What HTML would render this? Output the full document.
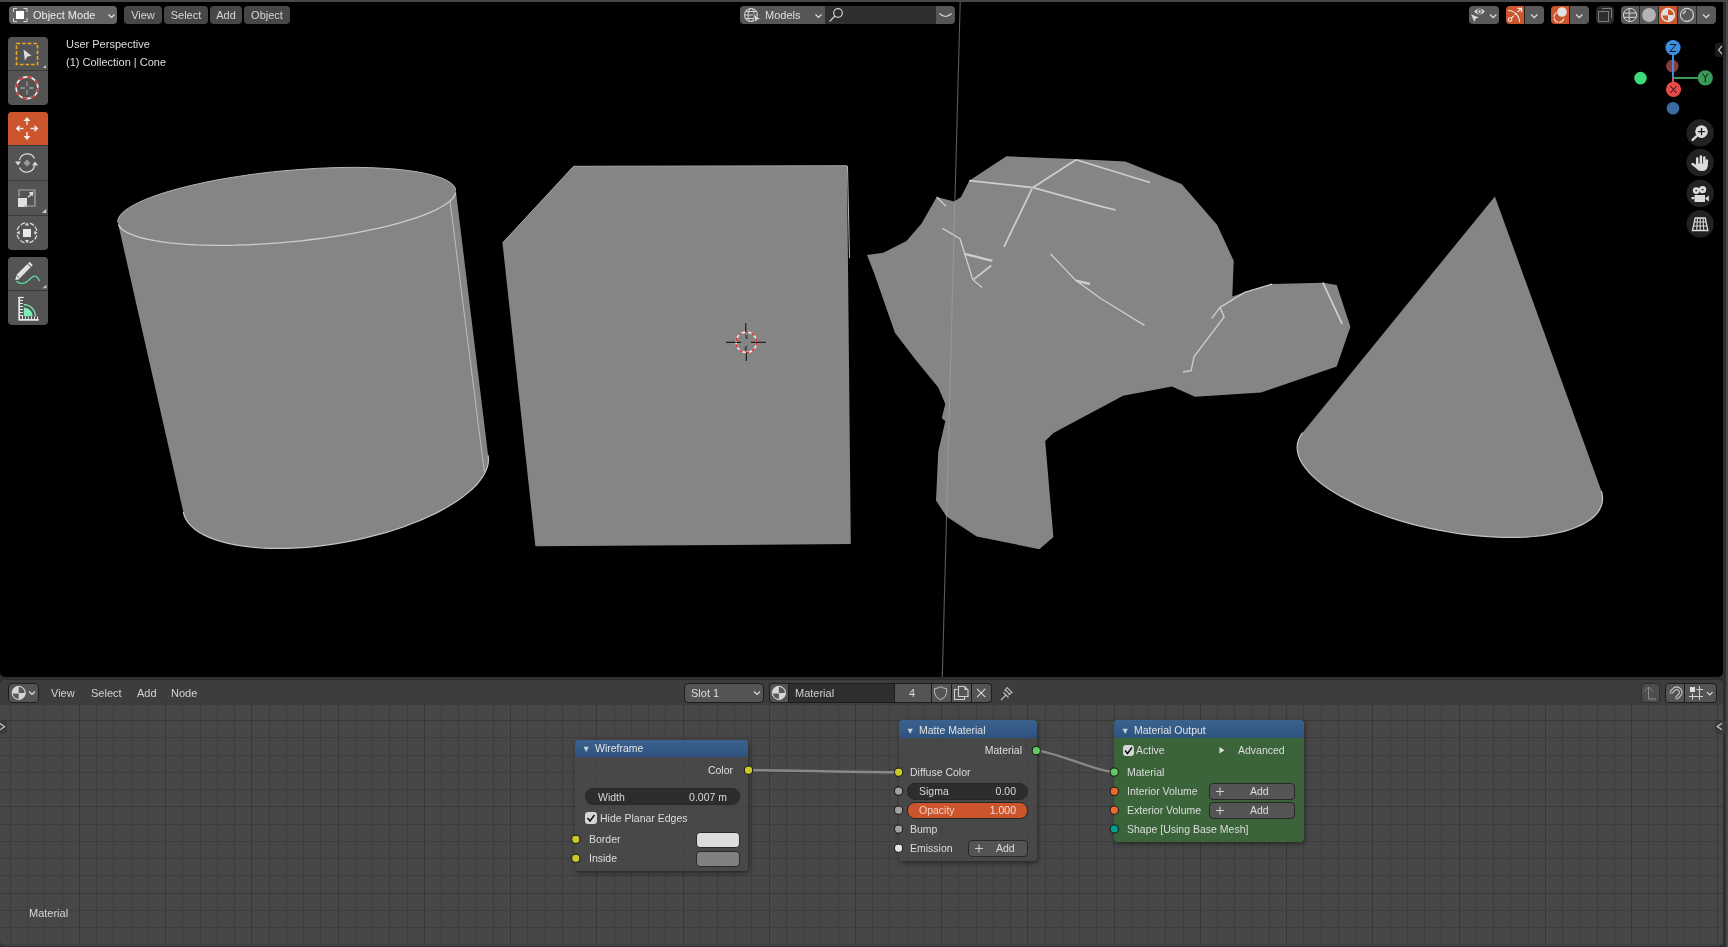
<!DOCTYPE html><html><head><meta charset="utf-8"><style>
*{box-sizing:border-box;margin:0;padding:0}
html,body{width:1728px;height:947px;overflow:hidden;background:#2e2e2e;font-family:"Liberation Sans",sans-serif;font-size:11px;color:#e6e6e6}
.a{position:absolute}
.t{position:absolute;white-space:pre;line-height:11px;font-size:11px;will-change:transform}
svg{position:absolute;overflow:visible}
</style></head><body><div class="a" style="left:0px;top:0px;width:1728px;height:2px;background:#474747;border-radius:0;"></div><div class="a" style="left:1726px;top:0px;width:2px;height:947px;background:#484848;border-radius:0;"></div><div class="a" style="left:0px;top:2px;width:1723px;height:675px;background:#000;border-radius:0 0 5px 5px;"></div><div class="a" style="left:0;top:680px;width:1723px;height:266px;background:#474747;border-radius:5px;overflow:hidden"><div class="a" style="left:0;top:0;width:1723px;height:25px;background:#3d3d3d"></div></div><svg style="left:0px;top:0px" width="1728" height="947" viewBox="0 0 1728 947"><rect x="10" y="705" width="1" height="241" fill="#3d3d3d"/><rect x="27" y="705" width="1" height="241" fill="#3d3d3d"/><rect x="44" y="705" width="1" height="241" fill="#3d3d3d"/><rect x="62" y="705" width="1" height="241" fill="#3d3d3d"/><rect x="79" y="705" width="1" height="241" fill="#383838"/><rect x="96" y="705" width="1" height="241" fill="#3d3d3d"/><rect x="113" y="705" width="1" height="241" fill="#3d3d3d"/><rect x="131" y="705" width="1" height="241" fill="#3d3d3d"/><rect x="148" y="705" width="1" height="241" fill="#3d3d3d"/><rect x="165" y="705" width="1" height="241" fill="#383838"/><rect x="182" y="705" width="1" height="241" fill="#3d3d3d"/><rect x="200" y="705" width="1" height="241" fill="#3d3d3d"/><rect x="217" y="705" width="1" height="241" fill="#3d3d3d"/><rect x="234" y="705" width="1" height="241" fill="#3d3d3d"/><rect x="251" y="705" width="1" height="241" fill="#383838"/><rect x="269" y="705" width="1" height="241" fill="#3d3d3d"/><rect x="286" y="705" width="1" height="241" fill="#3d3d3d"/><rect x="303" y="705" width="1" height="241" fill="#3d3d3d"/><rect x="320" y="705" width="1" height="241" fill="#3d3d3d"/><rect x="338" y="705" width="1" height="241" fill="#383838"/><rect x="355" y="705" width="1" height="241" fill="#3d3d3d"/><rect x="372" y="705" width="1" height="241" fill="#3d3d3d"/><rect x="389" y="705" width="1" height="241" fill="#3d3d3d"/><rect x="407" y="705" width="1" height="241" fill="#3d3d3d"/><rect x="424" y="705" width="1" height="241" fill="#383838"/><rect x="441" y="705" width="1" height="241" fill="#3d3d3d"/><rect x="458" y="705" width="1" height="241" fill="#3d3d3d"/><rect x="476" y="705" width="1" height="241" fill="#3d3d3d"/><rect x="493" y="705" width="1" height="241" fill="#3d3d3d"/><rect x="510" y="705" width="1" height="241" fill="#383838"/><rect x="527" y="705" width="1" height="241" fill="#3d3d3d"/><rect x="545" y="705" width="1" height="241" fill="#3d3d3d"/><rect x="562" y="705" width="1" height="241" fill="#3d3d3d"/><rect x="579" y="705" width="1" height="241" fill="#3d3d3d"/><rect x="596" y="705" width="1" height="241" fill="#383838"/><rect x="614" y="705" width="1" height="241" fill="#3d3d3d"/><rect x="631" y="705" width="1" height="241" fill="#3d3d3d"/><rect x="648" y="705" width="1" height="241" fill="#3d3d3d"/><rect x="665" y="705" width="1" height="241" fill="#3d3d3d"/><rect x="683" y="705" width="1" height="241" fill="#383838"/><rect x="700" y="705" width="1" height="241" fill="#3d3d3d"/><rect x="717" y="705" width="1" height="241" fill="#3d3d3d"/><rect x="734" y="705" width="1" height="241" fill="#3d3d3d"/><rect x="751" y="705" width="1" height="241" fill="#3d3d3d"/><rect x="769" y="705" width="1" height="241" fill="#383838"/><rect x="786" y="705" width="1" height="241" fill="#3d3d3d"/><rect x="803" y="705" width="1" height="241" fill="#3d3d3d"/><rect x="820" y="705" width="1" height="241" fill="#3d3d3d"/><rect x="838" y="705" width="1" height="241" fill="#3d3d3d"/><rect x="855" y="705" width="1" height="241" fill="#383838"/><rect x="872" y="705" width="1" height="241" fill="#3d3d3d"/><rect x="889" y="705" width="1" height="241" fill="#3d3d3d"/><rect x="907" y="705" width="1" height="241" fill="#3d3d3d"/><rect x="924" y="705" width="1" height="241" fill="#3d3d3d"/><rect x="941" y="705" width="1" height="241" fill="#383838"/><rect x="958" y="705" width="1" height="241" fill="#3d3d3d"/><rect x="976" y="705" width="1" height="241" fill="#3d3d3d"/><rect x="993" y="705" width="1" height="241" fill="#3d3d3d"/><rect x="1010" y="705" width="1" height="241" fill="#3d3d3d"/><rect x="1027" y="705" width="1" height="241" fill="#383838"/><rect x="1045" y="705" width="1" height="241" fill="#3d3d3d"/><rect x="1062" y="705" width="1" height="241" fill="#3d3d3d"/><rect x="1079" y="705" width="1" height="241" fill="#3d3d3d"/><rect x="1096" y="705" width="1" height="241" fill="#3d3d3d"/><rect x="1114" y="705" width="1" height="241" fill="#383838"/><rect x="1131" y="705" width="1" height="241" fill="#3d3d3d"/><rect x="1148" y="705" width="1" height="241" fill="#3d3d3d"/><rect x="1165" y="705" width="1" height="241" fill="#3d3d3d"/><rect x="1183" y="705" width="1" height="241" fill="#3d3d3d"/><rect x="1200" y="705" width="1" height="241" fill="#383838"/><rect x="1217" y="705" width="1" height="241" fill="#3d3d3d"/><rect x="1234" y="705" width="1" height="241" fill="#3d3d3d"/><rect x="1252" y="705" width="1" height="241" fill="#3d3d3d"/><rect x="1269" y="705" width="1" height="241" fill="#3d3d3d"/><rect x="1286" y="705" width="1" height="241" fill="#383838"/><rect x="1303" y="705" width="1" height="241" fill="#3d3d3d"/><rect x="1321" y="705" width="1" height="241" fill="#3d3d3d"/><rect x="1338" y="705" width="1" height="241" fill="#3d3d3d"/><rect x="1355" y="705" width="1" height="241" fill="#3d3d3d"/><rect x="1372" y="705" width="1" height="241" fill="#383838"/><rect x="1390" y="705" width="1" height="241" fill="#3d3d3d"/><rect x="1407" y="705" width="1" height="241" fill="#3d3d3d"/><rect x="1424" y="705" width="1" height="241" fill="#3d3d3d"/><rect x="1441" y="705" width="1" height="241" fill="#3d3d3d"/><rect x="1459" y="705" width="1" height="241" fill="#383838"/><rect x="1476" y="705" width="1" height="241" fill="#3d3d3d"/><rect x="1493" y="705" width="1" height="241" fill="#3d3d3d"/><rect x="1510" y="705" width="1" height="241" fill="#3d3d3d"/><rect x="1528" y="705" width="1" height="241" fill="#3d3d3d"/><rect x="1545" y="705" width="1" height="241" fill="#383838"/><rect x="1562" y="705" width="1" height="241" fill="#3d3d3d"/><rect x="1579" y="705" width="1" height="241" fill="#3d3d3d"/><rect x="1597" y="705" width="1" height="241" fill="#3d3d3d"/><rect x="1614" y="705" width="1" height="241" fill="#3d3d3d"/><rect x="1631" y="705" width="1" height="241" fill="#383838"/><rect x="1648" y="705" width="1" height="241" fill="#3d3d3d"/><rect x="1666" y="705" width="1" height="241" fill="#3d3d3d"/><rect x="1683" y="705" width="1" height="241" fill="#3d3d3d"/><rect x="1700" y="705" width="1" height="241" fill="#3d3d3d"/><rect x="1717" y="705" width="1" height="241" fill="#383838"/><rect x="0" y="944" width="1723" height="1" fill="#3d3d3d"/><rect x="0" y="927" width="1723" height="1" fill="#3d3d3d"/><rect x="0" y="910" width="1723" height="1" fill="#3d3d3d"/><rect x="0" y="893" width="1723" height="1" fill="#383838"/><rect x="0" y="875" width="1723" height="1" fill="#3d3d3d"/><rect x="0" y="858" width="1723" height="1" fill="#3d3d3d"/><rect x="0" y="841" width="1723" height="1" fill="#3d3d3d"/><rect x="0" y="824" width="1723" height="1" fill="#3d3d3d"/><rect x="0" y="806" width="1723" height="1" fill="#383838"/><rect x="0" y="789" width="1723" height="1" fill="#3d3d3d"/><rect x="0" y="772" width="1723" height="1" fill="#3d3d3d"/><rect x="0" y="755" width="1723" height="1" fill="#3d3d3d"/><rect x="0" y="737" width="1723" height="1" fill="#3d3d3d"/><rect x="0" y="720" width="1723" height="1" fill="#383838"/></svg><svg style="left:0px;top:0px" width="1728" height="947" viewBox="0 0 1728 947"><polygon points="117.8,222.3 117.9,220.0 118.8,217.6 120.4,215.1 122.7,212.6 125.7,210.1 129.4,207.5 133.7,205.0 138.8,202.4 144.4,199.9 150.7,197.4 157.5,194.9 164.9,192.5 172.8,190.2 181.2,187.9 190.1,185.7 199.4,183.6 209.0,181.6 219.0,179.6 229.3,177.8 239.8,176.2 250.5,174.6 261.4,173.2 272.4,171.9 283.4,170.8 294.5,169.9 305.5,169.1 316.4,168.4 327.3,167.9 337.9,167.6 348.3,167.4 358.5,167.4 368.4,167.6 377.9,168.0 387.0,168.5 395.7,169.1 403.9,170.0 411.6,170.9 418.8,172.1 425.4,173.4 431.4,174.8 436.8,176.4 441.6,178.0 445.7,179.8 449.1,181.8 451.9,183.8 453.9,185.9 455.2,188.2 455.8,190.4 488.1,455.3 488.5,459.1 488.2,463.1 487.3,467.2 485.7,471.3 483.5,475.5 480.6,479.7 477.2,483.9 473.1,488.2 468.4,492.4 463.2,496.6 457.4,500.7 451.1,504.8 444.3,508.7 437.1,512.6 429.4,516.3 421.3,519.9 412.8,523.3 404.0,526.6 394.9,529.7 385.6,532.6 376.0,535.2 366.3,537.7 356.5,539.9 346.5,541.9 336.5,543.6 326.5,545.1 316.6,546.3 306.7,547.2 296.9,547.9 287.4,548.3 278.0,548.4 268.9,548.3 260.0,547.8 251.5,547.1 243.3,546.1 235.6,544.9 228.2,543.4 221.4,541.6 215.0,539.6 209.1,537.4 203.8,534.9 199.0,532.2 194.8,529.2 191.3,526.1 188.3,522.9 186.0,519.4 184.3,515.8 183.3,512.0" fill="#858585"/><polyline points="455.6,192.8 454.7,195.2 453.2,197.7 450.9,200.2 447.9,202.7 444.2,205.3 439.8,207.8 434.8,210.3 429.1,212.9 422.9,215.4 416.0,217.8 408.6,220.2 400.7,222.6 392.3,224.9 383.4,227.1 374.2,229.2 364.5,231.2 354.5,233.1 344.3,234.9 333.7,236.6 323.0,238.1 312.2,239.5 301.2,240.8 290.1,241.9 279.1,242.9 268.0,243.7 257.1,244.4 246.3,244.8 235.6,245.2 225.2,245.3 215.0,245.3 205.2,245.1 195.7,244.8 186.6,244.3 177.9,243.6 169.7,242.8 161.9,241.8 154.8,240.7 148.1,239.4 142.1,238.0 136.7,236.4 131.9,234.7 127.8,232.9 124.4,231.0 121.7,229.0 119.7,226.8 118.4,224.6" fill="none" stroke="#cdcdcd" stroke-width="1.3"/><polyline points="117.8,222.3 117.9,220.0 118.8,217.5 120.4,215.1 122.7,212.6 125.7,210.0 129.4,207.5 133.7,205.0 138.8,202.4 144.4,199.9 150.7,197.4 157.5,194.9 164.9,192.5 172.8,190.2 181.2,187.9 190.1,185.7 199.4,183.6 209.0,181.5 219.0,179.6 229.3,177.8 239.8,176.2 250.5,174.6 261.4,173.2 272.4,171.9 283.4,170.8 294.5,169.9 305.5,169.1 316.4,168.4 327.3,167.9 337.9,167.6 348.3,167.4 358.5,167.4 368.4,167.6 377.9,168.0 387.0,168.5 395.7,169.1 403.9,170.0 411.6,171.0 418.8,172.1 425.4,173.4 431.4,174.8 436.8,176.4 441.6,178.0 445.7,179.9 449.1,181.8 451.8,183.8 453.9,185.9 455.2,188.1 455.7,190.4" fill="none" stroke="#b4b4b4" stroke-width="1"/><polyline points="488.1,455.3 488.5,459.1 488.2,463.1 487.3,467.2 485.7,471.3 483.5,475.5 480.6,479.7 477.2,484.0 473.1,488.2 468.4,492.4 463.2,496.6 457.4,500.7 451.1,504.8 444.3,508.7 437.1,512.6 429.4,516.3 421.3,519.9 412.8,523.3 404.0,526.6 394.9,529.7 385.6,532.6 376.0,535.2 366.3,537.7 356.5,539.9 346.5,541.9 336.5,543.6 326.5,545.1 316.6,546.3 306.7,547.3 297.0,547.9 287.4,548.3 278.0,548.4 268.9,548.3 260.0,547.8 251.5,547.1 243.3,546.2 235.6,544.9 228.2,543.4 221.4,541.6 215.0,539.6 209.1,537.4 203.8,534.9 199.0,532.2 194.8,529.2 191.3,526.1 188.3,522.9 186.0,519.4 184.3,515.8 183.3,512.0" fill="none" stroke="#c4c4c4" stroke-width="1.2"/><path d="M450 201L484.3 471.8" stroke="#c4c4c4" stroke-width="0.9"/><polygon points="573.6,166.3 847.0,165.7 850.8,544.0 535.4,546.3 502.5,243.0" fill="#858585"/><polyline points="502.5,243 573.6,166.3 847,165.7" fill="none" stroke="#b0b0b0" stroke-width="0.9"/><path d="M847.5 166L849.5 258" stroke="#b8b8b8" stroke-width="1"/><polygon points="1006.4,156.3 1080.0,159.2 1125.3,161.4 1181.6,183.9 1217.2,225.1 1233.7,260.8 1232.3,296.5 1244.7,292.3 1272.2,284.1 1322.9,282.7 1336.7,284.9 1350.4,326.7 1336.7,366.5 1261.2,392.5 1195.3,396.7 1192.8,395.8 1171.9,386.5 1123.1,395.8 1053.4,433.0 1045.2,441.1 1053.4,537.1 1039.4,549.2 976.7,536.4 946.5,516.6 936.0,500.4 938.3,451.5 945.3,421.3 941.8,417.9 945.3,403.9 938.3,387.6 915.8,360.0 894.9,332.8 873.9,272.4 867.0,255.0 883.2,252.7 906.5,241.1 921.6,223.6 936.7,196.9 954.1,201.6 961.1,196.9 969.2,180.7" fill="#858585"/><polyline points="969.2,180.7 1033.1,187.6 1100.0,206.2 1115.7,210.0" fill="none" stroke="#cdcdcd" stroke-width="1.75"/><polyline points="1033.1,187.6 1076.0,159.7" fill="none" stroke="#cdcdcd" stroke-width="1.75"/><polyline points="1076.0,159.7 1150.0,182.5" fill="none" stroke="#cdcdcd" stroke-width="1.5499999999999998"/><polyline points="1031.9,188.8 1004.0,246.9" fill="none" stroke="#cdcdcd" stroke-width="1.75"/><polyline points="936.7,196.9 946.0,206.2" fill="none" stroke="#cdcdcd" stroke-width="1.35"/><polyline points="942.5,228.3 960.0,238.7 972.7,279.4 982.0,287.5" fill="none" stroke="#cdcdcd" stroke-width="1.35"/><polyline points="964.6,253.8 992.4,260.8" fill="none" stroke="#cdcdcd" stroke-width="2.35"/><polyline points="973.8,279.4 991.3,265.5" fill="none" stroke="#cdcdcd" stroke-width="1.75"/><polyline points="1050.5,253.8 1076.0,280.6 1100.0,298.0 1144.5,325.3" fill="none" stroke="#cdcdcd" stroke-width="1.35"/><polyline points="1076.0,280.6 1090.0,284.0" fill="none" stroke="#cdcdcd" stroke-width="2.35"/><polyline points="1220.0,307.4 1244.7,292.3 1272.2,284.1" fill="none" stroke="#cdcdcd" stroke-width="1.35"/><polyline points="1211.8,318.4 1220.0,307.4 1224.1,317.0 1193.9,356.9 1191.2,370.6 1183.0,372.0" fill="none" stroke="#cdcdcd" stroke-width="1.35"/><polyline points="1322.9,282.7 1342.1,323.9" fill="none" stroke="#cdcdcd" stroke-width="1.75"/><polygon points="1297.1,447.1 1297.5,443.3 1298.6,439.6 1300.3,436.1 1302.6,432.7 1494.9,196.4 1601.4,490.9 1602.3,494.9 1602.6,498.9 1602.2,502.7 1601.1,506.4 1599.4,509.9 1597.1,513.3 1594.1,516.5 1590.5,519.5 1586.3,522.3 1581.5,524.9 1576.2,527.3 1570.3,529.5 1563.9,531.4 1557.0,533.0 1549.7,534.4 1541.9,535.6 1533.7,536.5 1525.2,537.0 1516.3,537.4 1507.2,537.4 1497.8,537.2 1488.2,536.7 1478.5,535.9 1468.6,534.9 1458.7,533.6 1448.7,532.0 1438.7,530.2 1428.8,528.1 1418.9,525.8 1409.2,523.3 1399.7,520.6 1390.3,517.6 1381.3,514.5 1372.5,511.2 1364.0,507.7 1356.0,504.1 1348.3,500.3 1341.0,496.4 1334.3,492.4 1328.0,488.4 1322.2,484.3 1317.0,480.1 1312.4,475.9 1308.3,471.7 1304.9,467.4 1302.0,463.3 1299.8,459.1 1298.3,455.0 1297.4,451.0" fill="#858585"/><polyline points="1601.4,490.9 1602.3,494.9 1602.6,498.9 1602.2,502.7 1601.1,506.3 1599.4,509.9 1597.1,513.3 1594.1,516.5 1590.5,519.5 1586.3,522.3 1581.5,524.9 1576.2,527.3 1570.3,529.5 1563.9,531.4 1557.0,533.0 1549.7,534.4 1541.9,535.6 1533.7,536.5 1525.2,537.1 1516.3,537.4 1507.2,537.4 1497.8,537.2 1488.2,536.7 1478.5,535.9 1468.6,534.9 1458.7,533.6 1448.7,532.0 1438.7,530.2 1428.8,528.1 1418.9,525.8 1409.2,523.3 1399.7,520.6 1390.3,517.6 1381.3,514.5 1372.5,511.2 1364.0,507.7 1356.0,504.1 1348.3,500.3 1341.0,496.4 1334.3,492.4 1328.0,488.4 1322.2,484.3 1317.0,480.1 1312.4,475.9 1308.3,471.7 1304.9,467.4 1302.0,463.3 1299.8,459.1 1298.3,455.0 1297.4,451.0 1297.1,447.1 1297.5,443.3 1298.6,439.6 1300.3,436.1 1302.6,432.7" fill="none" stroke="#c4c4c4" stroke-width="1.2"/><path d="M960.2 2L942.3 677" stroke="rgb(150,174,160)" stroke-opacity="0.55" stroke-width="1.1"/><circle cx="746.3" cy="342.3" r="10.3" fill="none" stroke="#f0f0f0" stroke-width="1.5"/><circle cx="746.3" cy="342.3" r="10.3" fill="none" stroke="#e02828" stroke-width="1.5" stroke-dasharray="3.3 3.4"/><path d="M745.8 323v9M746.3 353v8M726 342.3h15M751 342.3h15" stroke="#0a0a0a" stroke-width="1"/><path d="M745.5 334.5l1 4.5 1-4M746.8 345.5l-1 5 -1-3.5" fill="none" stroke="#222" stroke-width="0.8"/></svg><div class="a" style="left:9px;top:6px;width:108px;height:18px;background:#646464;border-radius:4px;"></div><svg style="left:0px;top:0px" width="1728" height="947" viewBox="0 0 1728 947"><path d="M13.5 12V8.5h3.5M23.5 8.5h3.5V12M27 18v3.5h-3.5M17 21.5h-3.5V18" fill="none" stroke="#d8d8d8" stroke-width="1"/><rect x="16" y="11" width="8" height="8" fill="#fff"/><path d="M108.5 14.5l3 3 3-3" fill="none" stroke="#e6e6e6" stroke-width="1.2"/></svg><div class="t" style="left:33px;top:10px;color:#ececec;font-size:11px;line-height:11px;">Object Mode</div><div class="a" style="left:124px;top:6px;width:38px;height:18px;background:#474747;border-radius:4px;"></div><div class="t" style="left:43.0px;width:200px;text-align:center;top:10px;color:#d6d6d6;font-size:11px;line-height:11px;">View</div><div class="a" style="left:164px;top:6px;width:44px;height:18px;background:#474747;border-radius:4px;"></div><div class="t" style="left:86.0px;width:200px;text-align:center;top:10px;color:#d6d6d6;font-size:11px;line-height:11px;">Select</div><div class="a" style="left:210px;top:6px;width:32px;height:18px;background:#474747;border-radius:4px;"></div><div class="t" style="left:126.0px;width:200px;text-align:center;top:10px;color:#d6d6d6;font-size:11px;line-height:11px;">Add</div><div class="a" style="left:244px;top:6px;width:46px;height:18px;background:#474747;border-radius:4px;"></div><div class="t" style="left:167.0px;width:200px;text-align:center;top:10px;color:#d6d6d6;font-size:11px;line-height:11px;">Object</div><div class="a" style="left:740px;top:6px;width:85px;height:18px;background:#565656;border-radius:4px 0 0 4px;"></div><div class="a" style="left:825px;top:6px;width:111px;height:18px;background:#2f2f2f;border-radius:0;"></div><div class="a" style="left:936px;top:6px;width:19px;height:18px;background:#565656;border-radius:0 4px 4px 0;"></div><svg style="left:0px;top:0px" width="1728" height="947" viewBox="0 0 1728 947"><g fill="none" stroke="#cfcfcf" stroke-width="1.1"><circle cx="751" cy="15" r="6.5"/><ellipse cx="751" cy="15" rx="3" ry="6.5"/><path d="M744.5 15h13M745.5 11.5h11M745.5 18.5h11"/></g><path d="M753.2 13.8l7.4 5.2-3.4 0.9-1.6 3.4z" fill="#e0e0e0" stroke="#565656" stroke-width="0.9"/><path d="M815.5 14.5l3 3 3-3" fill="none" stroke="#e0e0e0" stroke-width="1.2"/><circle cx="838" cy="13" r="4.3" fill="none" stroke="#d0d0d0" stroke-width="1.2"/><path d="M835 16l-5.5 5.5" stroke="#d0d0d0" stroke-width="1.2"/><path d="M939.5 13.5q6 6 12 0" fill="none" stroke="#d8d8d8" stroke-width="1.1"/></svg><div class="t" style="left:765px;top:10px;color:#dedede;font-size:11px;line-height:11px;">Models</div><div class="a" style="left:1469px;top:6px;width:30px;height:18px;background:#5a5a5a;border-radius:4px;"></div><svg style="left:0px;top:0px" width="1728" height="947" viewBox="0 0 1728 947"><path d="M1474 11.5q5.5-6 11 0q-5.5 6-11 0z" fill="#d8d8d8"/><circle cx="1479.5" cy="11.5" r="1.9" fill="none" stroke="#5a5a5a" stroke-width="1.1"/><path d="M1471 14.3l8 3.2-3.2 1-1.4 3.4z" fill="#d8d8d8"/><path d="M1490 14.5l3.2 3.2 3.2-3.2" fill="none" stroke="#e0e0e0" stroke-width="1.2"/></svg><div class="a" style="left:1506px;top:6px;width:18px;height:18px;background:#cd552d;border-radius:4px 0 0 4px;"></div><div class="a" style="left:1524px;top:6px;width:20px;height:18px;background:#5a5a5a;border-radius:0 4px 4px 0;"></div><div class="a" style="left:1524px;top:6px;width:1px;height:18px;background:#202020;border-radius:0;"></div><svg style="left:0px;top:0px" width="1728" height="947" viewBox="0 0 1728 947"><g fill="none" stroke="#ececec" stroke-width="1.1"><path d="M1508 10.5A11.5 11.5 0 0 1 1519.5 22"/><circle cx="1510" cy="19.6" r="1.8"/><path d="M1511.4 18.2l2.2-2.2M1514.8 14.8l1.6-1.6M1517.6 12l3.8-3.8" /><path d="M1517.5 8.3h4v4" stroke-width="1.3"/></g><path d="M1531 14.5l3.2 3.2 3.2-3.2" fill="none" stroke="#e0e0e0" stroke-width="1.2"/></svg><div class="a" style="left:1551px;top:6px;width:18px;height:18px;background:#cd552d;border-radius:4px 0 0 4px;"></div><div class="a" style="left:1569px;top:6px;width:20px;height:18px;background:#5a5a5a;border-radius:0 4px 4px 0;"></div><div class="a" style="left:1569px;top:6px;width:1px;height:18px;background:#202020;border-radius:0;"></div><svg style="left:0px;top:0px" width="1728" height="947" viewBox="0 0 1728 947"><circle cx="1562" cy="12" r="4.8" fill="#e0e0e0"/><path d="M1557.5 12.5a5 5 0 1 0 6.5 5" fill="none" stroke="#e8e8e8" stroke-width="1.1" stroke-dasharray="6 1"/><path d="M1576 14.5l3.2 3.2 3.2-3.2" fill="none" stroke="#e0e0e0" stroke-width="1.2"/></svg><div class="a" style="left:1596px;top:6px;width:18px;height:18px;background:#2d2d2d;border-radius:4px;border:1px solid #262626"></div><svg style="left:0px;top:0px" width="1728" height="947" viewBox="0 0 1728 947"><g fill="none" stroke="#7c7c7c" stroke-width="1"><rect x="1598.5" y="11.5" width="10" height="10"/><path d="M1602 8.5h9.5v9.5"/></g></svg><div class="a" style="left:1621px;top:6px;width:95px;height:18px;background:#5a5a5a;border-radius:4px;"></div><div class="a" style="left:1639px;top:6px;width:1px;height:18px;background:#2a2a2a;border-radius:0;"></div><div class="a" style="left:1658px;top:6px;width:1px;height:18px;background:#2a2a2a;border-radius:0;"></div><div class="a" style="left:1677px;top:6px;width:1px;height:18px;background:#2a2a2a;border-radius:0;"></div><div class="a" style="left:1696px;top:6px;width:1px;height:18px;background:#2a2a2a;border-radius:0;"></div><div class="a" style="left:1659px;top:6px;width:18px;height:18px;background:#cd552d;border-radius:0;"></div><svg style="left:0px;top:0px" width="1728" height="947" viewBox="0 0 1728 947"><g fill="none" stroke="#d4d4d4" stroke-width="1"><circle cx="1630" cy="15" r="6.6"/><path d="M1629.2 8.4v13.2M1623.6 13.1h12.8M1623.6 17.3h12.8"/></g><circle cx="1649" cy="15" r="6.9" fill="#b4b4b4"/><circle cx="1668" cy="15" r="6.6" fill="#e0e0e0"/><path d="M1668 9.2v5.8h5.7a5.8 5.8 0 0 0 -5.7 -5.8zM1662.3 15.5a5.8 5.8 0 0 0 5.7 5.2v-5.2z" fill="#cd552d"/><circle cx="1668" cy="15" r="6.6" fill="none" stroke="#e0e0e0" stroke-width="1.1"/><circle cx="1687" cy="15" r="6.6" fill="none" stroke="#cfcfcf" stroke-width="1.1"/><path d="M1683.2 14.2A4.3 4.3 0 0 1 1686 11" fill="none" stroke="#c8c8c8" stroke-width="1.7"/><path d="M1692.4 12.5A5.6 5.6 0 0 1 1686 20.6" fill="none" stroke="#c8c8c8" stroke-width="1.3" stroke-dasharray="0.9 1.1"/><path d="M1703 14.5l3.2 3.2 3.2-3.2" fill="none" stroke="#e0e0e0" stroke-width="1.2"/></svg><div class="a" style="left:8px;top:37px;width:40px;height:68px;background:#545454;border-radius:4px;"></div><div class="a" style="left:8px;top:70px;width:40px;height:1px;background:#3a3a3a;border-radius:0;"></div><div class="a" style="left:8px;top:112px;width:40px;height:138px;background:#545454;border-radius:4px;"></div><div class="a" style="left:8px;top:112px;width:40px;height:33px;background:#cd552d;border-radius:4px 4px 0 0;"></div><div class="a" style="left:8px;top:145px;width:40px;height:1px;background:#3a3a3a;border-radius:0;"></div><div class="a" style="left:8px;top:180px;width:40px;height:1px;background:#3a3a3a;border-radius:0;"></div><div class="a" style="left:8px;top:215px;width:40px;height:1px;background:#3a3a3a;border-radius:0;"></div><div class="a" style="left:8px;top:257px;width:40px;height:68px;background:#545454;border-radius:4px;"></div><div class="a" style="left:8px;top:290px;width:40px;height:1px;background:#3a3a3a;border-radius:0;"></div><svg style="left:0px;top:0px" width="1728" height="947" viewBox="0 0 1728 947"><rect x="16.5" y="43.5" width="21" height="21" fill="none" stroke="#f5a623" stroke-width="1.6" stroke-dasharray="3.6 2"/><path d="M23.5 49.5l8 6.2-4 0.8-2.6 4.3z" fill="#dcdcdc"/><path d="M46 65l-3 3h3z" fill="#cfcfcf"/><circle cx="27" cy="87.8" r="10.9" fill="none" stroke="#e8e8e8" stroke-width="1.7"/><circle cx="27" cy="87.8" r="10.9" fill="none" stroke="#d12f2f" stroke-width="1.7" stroke-dasharray="4.3 4.26"/><path d="M27 81.5v4.5M27 90v4.5M20.5 88h4.5M29 88h4.5" stroke="#9a9a9a" stroke-width="1.3"/><g fill="#ececec"><path d="M27 117l-3.5 4h7z M27 140l-3.5-4h7z M15.5 128.5l4-3.5v7z M38.5 128.5l-4-3.5v7z"/></g><path d="M27 121v4M27 132v4M19.5 128.5h4M30.5 128.5h4" stroke="#ececec" stroke-width="1.4"/><path d="M19.5 160a8 8 0 0 1 15 -1.5M34.5 166a8 8 0 0 1 -15 1.5" fill="none" stroke="#dcdcdc" stroke-width="1.2"/><path d="M15 161.5h6l-3 4z M32 165.5h6l-3-4z" fill="#dcdcdc"/><path d="M27 159.5l3.5 3.5-3.5 3.5-3.5-3.5z" fill="#9a9a9a"/><rect x="18" y="198" width="9" height="9" fill="#e0e0e0"/><path d="M19 196.5v-6.5h16v16h-11" fill="none" stroke="#a8a8a8" stroke-width="1.2"/><path d="M28.2 197.3l4.3-4.3" stroke="#e0e0e0" stroke-width="1.3"/><path d="M33.6 191.6l-5 1 4 4z" fill="#e0e0e0"/><path d="M46.2 208.8l-4.2 4.2h4.2z" fill="#cfcfcf"/><circle cx="27" cy="232.8" r="10.1" fill="none" stroke="#dcdcdc" stroke-width="1.2" stroke-dasharray="4.7 1.5 4.7 5" stroke-dashoffset="13.4"/><rect x="23" y="229" width="8" height="8" fill="#e6e6e6"/><path d="M27 222.2l-2 3.3h4z M27 243.4l-2-3.3h4z M16.4 232.8l3.3-2v4z M37.6 232.8l-3.3-2v4z" fill="#dcdcdc"/><path d="M18.2 276.5L29 265.7" stroke="#e0e0e0" stroke-width="4.6"/><path d="M29.6 265.1l1.6-1.6" stroke="#e0e0e0" stroke-width="4.6"/><path d="M15.2 280.2l1.2-4.8 3.6 3.6z" fill="#e0e0e0"/><path d="M16.5 281.2C20 284.5 25 284 29.5 279.5S36.5 274.5 39.5 281" fill="none" stroke="#5ee0a0" stroke-width="1.3"/><path d="M46.3 284.8l-3.6 3.4h3.6z" fill="#cfcfcf"/><path d="M23.8 316.2v-8.8a8.8 8.8 0 0 1 8.8 8.8z" fill="#7cf0b4"/><path d="M23.8 304.6a11.6 11.6 0 0 1 11.6 11.6" fill="none" stroke="#7cf0b4" stroke-width="1.2"/><path d="M19.2 297v22.8h19.5" fill="none" stroke="#e6e6e6" stroke-width="1.8"/><path d="M18.2 297.5h5.5" stroke="#e6e6e6" stroke-width="1.3"/><path d="M19 300.5h4M19 303.5h4M19 306.5h4M19 309.5h4M19 312.5h4M19 315.5h4M22.5 319.5v-3.5M25.5 319.5v-3M28.5 319.5v-3M31.5 319.5v-3M34.5 319.5v-3M37.5 319.5v-3" stroke="#e6e6e6" stroke-width="1"/></svg><div class="t" style="left:66px;top:39px;color:#dedede;font-size:11px;line-height:11px;">User Perspective</div><div class="t" style="left:66px;top:57px;color:#dedede;font-size:11px;line-height:11px;">(1) Collection | Cone</div><svg style="left:0px;top:0px" width="1728" height="947" viewBox="0 0 1728 947"><path d="M1673 48v30" stroke="#3d8ee0" stroke-width="2"/><path d="M1673 78h32" stroke="#3a9a58" stroke-width="2"/><path d="M1673 78v11" stroke="#e84a4a" stroke-width="2"/><circle cx="1672.3" cy="66.1" r="6.3" fill="#8a3c3c"/><path d="M1673 60v18" stroke="#3d8ee0" stroke-width="2"/><circle cx="1640.5" cy="78.1" r="6.3" fill="#3ddc7a"/><circle cx="1673" cy="108.2" r="6.3" fill="#3a6aa0"/><circle cx="1673" cy="47.6" r="7.6" fill="#3d8ee0"/><circle cx="1705.3" cy="77.9" r="7.6" fill="#3a9a58"/><circle cx="1673.5" cy="89.3" r="7.6" fill="#e84a4a"/><g fill="none" stroke="#101010" stroke-width="1"><path d="M1670 44.5h6l-6 7h6"/><path d="M1702.5 73.5l2.8 3.8 2.8-3.8M1705.3 77.3v5"/><path d="M1670.5 86l6 7M1676.5 86l-6 7"/></g><rect x="1715" y="43" width="9" height="14" rx="3" fill="#1a1a1a"/><path d="M1722 46l-3.5 4 3.5 4" fill="none" stroke="#bdbdbd" stroke-width="1.2"/></svg><svg style="left:0px;top:0px" width="1728" height="947" viewBox="0 0 1728 947"><circle cx="1700.2" cy="132.9" r="13.7" fill="#222"/><circle cx="1700.2" cy="162.5" r="13.7" fill="#222"/><circle cx="1700.2" cy="193.5" r="13.7" fill="#222"/><circle cx="1700.2" cy="223.9" r="13.7" fill="#222"/><circle cx="1701.5" cy="131.6" r="6.3" fill="#dcdcdc"/><path d="M1701.5 128v7.2M1697.9 131.6h7.2" stroke="#1c1c1c" stroke-width="1.3"/><path d="M1692.6 139.9l3.8-3.6" stroke="#dcdcdc" stroke-width="2.3" stroke-linecap="round"/><g stroke="#dcdcdc" stroke-width="2.5" stroke-linecap="round"><path d="M1697.2 158.5v7M1700.9 156.6v7M1704.3 157.6v7M1706.9 160.6l-0.5 5M1692.6 164l4 3"/></g><path d="M1695.8 163.5h11.8v2.5q0 5-6 5q-4 0-5.8-3.5z" fill="#dcdcdc"/><circle cx="1696.2" cy="190.6" r="3.4" fill="#dcdcdc"/><circle cx="1702.6" cy="189.6" r="3.6" fill="#dcdcdc"/><circle cx="1696.2" cy="190.6" r="0.9" fill="#222"/><circle cx="1702.6" cy="189.6" r="0.9" fill="#222"/><rect x="1694.5" y="195" width="10.5" height="7" fill="#dcdcdc"/><path d="M1705 198.5l3.8-3v6z" fill="#dcdcdc"/><rect x="1691.5" y="197" width="3" height="2.2" fill="#dcdcdc"/><path d="M1692.5 230.5l2.7-12.5h10l2.7 12.5z" fill="none" stroke="#dcdcdc" stroke-width="1.3"/><path d="M1693.6 226h13.2M1694.5 222h11.4M1697.5 218l-0.8 12.5M1700.2 218v12.5M1703 218l0.8 12.5" stroke="#dcdcdc" stroke-width="1.1"/></svg><div class="a" style="left:8px;top:683px;width:31px;height:20px;background:#545454;border-radius:4px;border:1px solid #1c1c1c"></div><svg style="left:0px;top:0px" width="1728" height="947" viewBox="0 0 1728 947"><circle cx="18.7" cy="692.9" r="6.6" fill="#d6d6d6"/><path d="M18.7 686.8v6.1h6.1a6.1 6.1 0 0 0 -6.1 -6.1zM12.6 693.4a6.1 6.1 0 0 0 6.1 5.6v-5.6z" fill="#5a5a5a"/><circle cx="18.7" cy="692.9" r="6.6" fill="none" stroke="#d6d6d6" stroke-width="1"/><path d="M29 691.5l3 3 3-3" fill="none" stroke="#e0e0e0" stroke-width="1.1"/></svg><div class="t" style="left:51px;top:688px;color:#d2d2d2;font-size:11px;line-height:11px;">View</div><div class="t" style="left:91.4px;top:688px;color:#d2d2d2;font-size:11px;line-height:11px;">Select</div><div class="t" style="left:137px;top:688px;color:#d2d2d2;font-size:11px;line-height:11px;">Add</div><div class="t" style="left:171.3px;top:688px;color:#d2d2d2;font-size:11px;line-height:11px;">Node</div><div class="a" style="left:684px;top:683px;width:80px;height:20px;background:#545454;border-radius:4px;border:1px solid #1c1c1c"></div><div class="t" style="left:691px;top:688px;color:#dcdcdc;font-size:11px;line-height:11px;">Slot 1</div><svg style="left:0px;top:0px" width="1728" height="947" viewBox="0 0 1728 947"><path d="M754 691.5l3 3 3-3" fill="none" stroke="#e0e0e0" stroke-width="1.1"/></svg><div class="a" style="left:769px;top:683px;width:223px;height:20px;background:#1c1c1c;border-radius:4px;"></div><div class="a" style="left:770px;top:684px;width:18px;height:18px;background:#545454;border-radius:3px 0 0 3px;"></div><div class="a" style="left:789px;top:684px;width:105px;height:18px;background:#2e2e2e;border-radius:0;"></div><div class="a" style="left:895px;top:684px;width:36px;height:18px;background:#545454;border-radius:0;"></div><div class="a" style="left:932px;top:684px;width:19px;height:18px;background:#545454;border-radius:0;"></div><div class="a" style="left:952px;top:684px;width:19px;height:18px;background:#545454;border-radius:0;"></div><div class="a" style="left:972px;top:684px;width:19px;height:18px;background:#545454;border-radius:0 3px 3px 0;"></div><svg style="left:0px;top:0px" width="1728" height="947" viewBox="0 0 1728 947"><circle cx="778.9" cy="692.9" r="6.6" fill="#d6d6d6"/><path d="M778.9 686.8v6.1h6.1a6.1 6.1 0 0 0 -6.1 -6.1zM772.8 693.4a6.1 6.1 0 0 0 6.1 5.6v-5.6z" fill="#5a5a5a"/><circle cx="778.9" cy="692.9" r="6.6" fill="none" stroke="#d6d6d6" stroke-width="1"/><path d="M940.6 686.6q-3 2-6 2v4q0 4.5 6 7.3q6-2.8 6-7.3v-4q-3 0-6-2z" fill="none" stroke="#bdbdbd" stroke-width="1"/><path d="M957.5 689.5h-3v10h10v-3" fill="none" stroke="#cfcfcf" stroke-width="1.1"/><path d="M958.5 686.5h6l3.5 3.5v6.5h-9.5z" fill="none" stroke="#cfcfcf" stroke-width="1.1"/><path d="M964.5 686.5v3.5h3.5z" fill="#cfcfcf"/><path d="M977 688.8l8.3 8.3M985.3 688.8l-8.3 8.3" stroke="#d8d8d8" stroke-width="1.1"/><path d="M1001 700l5-5M1003.5 692.5l5 5M1005.5 690l4.5 4.5M1004.5 691l2.5-3.5 5 5-3.5 2.5" fill="none" stroke="#bdbdbd" stroke-width="1.1"/></svg><div class="t" style="left:795.4px;top:688px;color:#cfcfcf;font-size:11px;line-height:11px;">Material</div><div class="t" style="left:897.3px;width:30px;text-align:center;top:688px;color:#dcdcdc;font-size:11px;line-height:11px;">4</div><div class="a" style="left:1641px;top:683px;width:19px;height:20px;background:#4d4d4d;border-radius:4px;border:1px solid #2e2e2e"></div><div class="a" style="left:1665px;top:683px;width:52px;height:20px;background:#545454;border-radius:4px;border:1px solid #1c1c1c"></div><div class="a" style="left:1684px;top:684px;width:1px;height:18px;background:#1c1c1c;border-radius:0;"></div><svg style="left:0px;top:0px" width="1728" height="947" viewBox="0 0 1728 947"><path d="M1644 691.5l4.5-4.5 4.5 4.5M1648.5 687v12h7.5" fill="none" stroke="#8c8c8c" stroke-width="1"/><path d="M1670.7 692.7L1674.2 689.2A4 4 0 0 1 1679.8 694.8L1676.3 698.3" fill="none" stroke="#cfcfcf" stroke-width="3.6"/><path d="M1670.7 692.7L1674.2 689.2A4 4 0 0 1 1679.8 694.8L1676.3 698.3" fill="none" stroke="#545454" stroke-width="1.6"/><path d="M1669.6 693.8l1.6 -1.6M1675.2 699.4l1.6 -1.6" stroke="#cfcfcf" stroke-width="1"/><rect x="1690" y="687" width="5" height="5" fill="#dcdcdc"/><path d="M1688.9 696.5h14.1M1696.3 689.5h6.7M1692.5 693.5v6.3M1699.5 686v13.8" stroke="#d0d0d0" stroke-width="1"/><path d="M1707 692.2l2.8 2.8 2.8-2.8" fill="none" stroke="#e0e0e0" stroke-width="1.1"/></svg><svg style="left:0px;top:0px" width="1728" height="947" viewBox="0 0 1728 947"><rect x="-5" y="720" width="12" height="14" rx="4" fill="#3a3a3a"/><path d="M0 723.5l4.5 3.2-4.5 3.2" fill="none" stroke="#cfcfcf" stroke-width="1.1"/><rect x="1715" y="721" width="12" height="13" rx="4" fill="#3a3a3a"/><path d="M1722 723.2l-4.8 3.3 4.8 3.3" fill="none" stroke="#cfcfcf" stroke-width="1.1"/></svg><div class="t" style="left:29.4px;top:908px;color:#d6d6d6;font-size:11px;line-height:11px;">Material</div><svg style="left:0px;top:0px" width="1728" height="947" viewBox="0 0 1728 947"><path d="M748.5 770.2C790 770.2 856 772.2 898.6 772.2" fill="none" stroke="#888" stroke-width="2.4"/><path d="M1036.3 750.6C1052 750.6 1098 772.1 1114.3 772.1" fill="none" stroke="#888" stroke-width="2.4"/></svg><div class="a" style="left:575px;top:740px;width:173px;height:131px;border-radius:4px;background:rgba(74,74,74,0.72);box-shadow:1px 2px 5px rgba(0,0,0,0.45);overflow:hidden"><div class="a" style="left:0;top:0;width:100%;height:17px;background:linear-gradient(#3a6391,#2d5383);opacity:0.95"></div></div><svg style="left:0px;top:0px" width="1728" height="947" viewBox="0 0 1728 947"><path d="M583.5 746.7h5.4l-2.7 5.2z" fill="#c6cdd6"/></svg><div class="t" style="left:595px;top:743px;color:#e2e2e2;font-size:10.5px;line-height:10.5px;">Wireframe</div><div class="t" style="left:433px;width:300px;text-align:right;top:765px;color:#dedede;font-size:10.5px;line-height:10.5px;">Color</div><div class="a" style="left:585px;top:788px;width:155px;height:17px;background:#2d2d2d;border-radius:8px;border:1px solid #272727"></div><div class="t" style="left:598px;top:792px;color:#d8d8d8;font-size:10.5px;line-height:10.5px;">Width</div><div class="t" style="left:426.5px;width:300px;text-align:right;top:792px;color:#d8d8d8;font-size:10.5px;line-height:10.5px;">0.007 m</div><div class="a" style="left:585px;top:812px;width:12px;height:12px;background:#d6d6d6;border-radius:3px;"></div><svg style="left:0px;top:0px" width="1728" height="947" viewBox="0 0 1728 947"><path d="M587.5 818l2.5 3 4.5-6" fill="none" stroke="#111" stroke-width="1.5"/></svg><div class="t" style="left:599.5px;top:813px;color:#dcdcdc;font-size:10.5px;line-height:10.5px;">Hide Planar Edges</div><div class="t" style="left:588.5px;top:834px;color:#dcdcdc;font-size:10.5px;line-height:10.5px;">Border</div><div class="t" style="left:588.5px;top:853px;color:#dcdcdc;font-size:10.5px;line-height:10.5px;">Inside</div><div class="a" style="left:696px;top:832px;width:44px;height:16px;background:#dcdcdc;border-radius:4px;border:1px solid #2a2a2a"></div><div class="a" style="left:696px;top:851px;width:44px;height:16px;background:#808080;border-radius:4px;border:1px solid #2a2a2a"></div><svg style="left:0px;top:0px" width="1728" height="947" viewBox="0 0 1728 947"><circle cx="748.5" cy="770.2" r="4.1" fill="#c9c92a" stroke="#141414" stroke-width="1"/></svg><svg style="left:0px;top:0px" width="1728" height="947" viewBox="0 0 1728 947"><circle cx="575.8" cy="839.3" r="4.1" fill="#c9c92a" stroke="#141414" stroke-width="1"/></svg><svg style="left:0px;top:0px" width="1728" height="947" viewBox="0 0 1728 947"><circle cx="575.8" cy="858.3" r="4.1" fill="#c9c92a" stroke="#141414" stroke-width="1"/></svg><div class="a" style="left:899px;top:720px;width:138px;height:141px;border-radius:4px;background:rgba(74,74,74,0.72);box-shadow:1px 2px 5px rgba(0,0,0,0.45);overflow:hidden"><div class="a" style="left:0;top:0;width:100%;height:18px;background:linear-gradient(#3a6391,#2d5383);opacity:0.95"></div></div><svg style="left:0px;top:0px" width="1728" height="947" viewBox="0 0 1728 947"><path d="M907.5 728.7h5.4l-2.7 5.2z" fill="#c6cdd6"/></svg><div class="t" style="left:919px;top:725px;color:#e2e2e2;font-size:10.5px;line-height:10.5px;">Matte Material</div><div class="t" style="left:721.5px;width:300px;text-align:right;top:745px;color:#dedede;font-size:10.5px;line-height:10.5px;">Material</div><div class="t" style="left:910.4px;top:767px;color:#dcdcdc;font-size:10.5px;line-height:10.5px;">Diffuse Color</div><div class="a" style="left:907px;top:783px;width:121px;height:17px;background:#2d2d2d;border-radius:8px;border:1px solid #272727"></div><div class="t" style="left:919.2px;top:786px;color:#d8d8d8;font-size:10.5px;line-height:10.5px;">Sigma</div><div class="t" style="left:715.5px;width:300px;text-align:right;top:786px;color:#d8d8d8;font-size:10.5px;line-height:10.5px;">0.00</div><div class="a" style="left:907px;top:802px;width:121px;height:17px;background:#cd552d;border-radius:8px;border:1px solid #272727"></div><div class="t" style="left:919.2px;top:805px;color:#f0d0c0;font-size:10.5px;line-height:10.5px;">Opacity</div><div class="t" style="left:715.5px;width:300px;text-align:right;top:805px;color:#f0e0d8;font-size:10.5px;line-height:10.5px;">1.000</div><div class="t" style="left:910.4px;top:824px;color:#dcdcdc;font-size:10.5px;line-height:10.5px;">Bump</div><div class="t" style="left:910.4px;top:843px;color:#dcdcdc;font-size:10.5px;line-height:10.5px;">Emission</div><div class="a" style="left:968px;top:840px;width:60px;height:17px;background:#545454;border-radius:4px;border:1px solid #272727"></div><svg style="left:0px;top:0px" width="1728" height="947" viewBox="0 0 1728 947"><path d="M975 848.5h8M979 844.5v8" stroke="#cfcfcf" stroke-width="1.1"/></svg><div class="t" style="left:996.3px;top:843px;color:#dcdcdc;font-size:10.5px;line-height:10.5px;">Add</div><svg style="left:0px;top:0px" width="1728" height="947" viewBox="0 0 1728 947"><circle cx="1036.3" cy="750.6" r="4.1" fill="#63c763" stroke="#141414" stroke-width="1"/></svg><svg style="left:0px;top:0px" width="1728" height="947" viewBox="0 0 1728 947"><circle cx="898.6" cy="772.2" r="4.1" fill="#c9c92a" stroke="#141414" stroke-width="1"/></svg><svg style="left:0px;top:0px" width="1728" height="947" viewBox="0 0 1728 947"><circle cx="898.6" cy="791.1" r="4.1" fill="#a1a1a1" stroke="#141414" stroke-width="1"/></svg><svg style="left:0px;top:0px" width="1728" height="947" viewBox="0 0 1728 947"><circle cx="898.6" cy="810.2" r="4.1" fill="#a1a1a1" stroke="#141414" stroke-width="1"/></svg><svg style="left:0px;top:0px" width="1728" height="947" viewBox="0 0 1728 947"><circle cx="898.6" cy="829.1" r="4.1" fill="#a1a1a1" stroke="#141414" stroke-width="1"/></svg><svg style="left:0px;top:0px" width="1728" height="947" viewBox="0 0 1728 947"><circle cx="898.6" cy="848.2" r="4.1" fill="#e6e6e6" stroke="#141414" stroke-width="1"/></svg><div class="a" style="left:1114px;top:720px;width:190px;height:122px;border-radius:4px;background:rgba(58,102,58,0.93);box-shadow:1px 2px 5px rgba(0,0,0,0.45);overflow:hidden"><div class="a" style="left:0;top:0;width:100%;height:18px;background:linear-gradient(#3a6391,#2d5383);opacity:0.95"></div></div><svg style="left:0px;top:0px" width="1728" height="947" viewBox="0 0 1728 947"><path d="M1122.5 728.7h5.4l-2.7 5.2z" fill="#c6cdd6"/></svg><div class="t" style="left:1134px;top:725px;color:#e2e2e2;font-size:10.5px;line-height:10.5px;">Material Output</div><div class="a" style="left:1123px;top:745px;width:11px;height:11px;background:#d6d6d6;border-radius:3px;"></div><svg style="left:0px;top:0px" width="1728" height="947" viewBox="0 0 1728 947"><path d="M1125 750.5l2.5 3 4.5-6" fill="none" stroke="#111" stroke-width="1.5"/><path d="M1219.5 747v6.5l5-3.25z" fill="#e0e0e0"/></svg><div class="t" style="left:1136.2px;top:745px;color:#dcdcdc;font-size:10.5px;line-height:10.5px;">Active</div><div class="t" style="left:1238.2px;top:745px;color:#dcdcdc;font-size:10.5px;line-height:10.5px;">Advanced</div><div class="t" style="left:1126.6px;top:767px;color:#dcdcdc;font-size:10.5px;line-height:10.5px;">Material</div><div class="t" style="left:1126.6px;top:786px;color:#dcdcdc;font-size:10.5px;line-height:10.5px;">Interior Volume</div><div class="t" style="left:1126.6px;top:805px;color:#dcdcdc;font-size:10.5px;line-height:10.5px;">Exterior Volume</div><div class="t" style="left:1126.6px;top:824px;color:#dcdcdc;font-size:10.5px;line-height:10.5px;">Shape [Using Base Mesh]</div><div class="a" style="left:1209px;top:783px;width:86px;height:17px;background:#555555;border-radius:4px;border:1px solid #272727"></div><div class="a" style="left:1209px;top:802px;width:86px;height:17px;background:#555555;border-radius:4px;border:1px solid #272727"></div><svg style="left:0px;top:0px" width="1728" height="947" viewBox="0 0 1728 947"><path d="M1216 791.5h8M1220 787.5v8M1216 810.5h8M1220 806.5v8" stroke="#cfcfcf" stroke-width="1.1"/></svg><div class="t" style="left:1250px;top:786px;color:#dcdcdc;font-size:10.5px;line-height:10.5px;">Add</div><div class="t" style="left:1250px;top:805px;color:#dcdcdc;font-size:10.5px;line-height:10.5px;">Add</div><svg style="left:0px;top:0px" width="1728" height="947" viewBox="0 0 1728 947"><circle cx="1114.3" cy="772.1" r="4.1" fill="#63c763" stroke="#141414" stroke-width="1"/></svg><svg style="left:0px;top:0px" width="1728" height="947" viewBox="0 0 1728 947"><circle cx="1114.3" cy="791.3" r="4.1" fill="#ea6a30" stroke="#141414" stroke-width="1"/></svg><svg style="left:0px;top:0px" width="1728" height="947" viewBox="0 0 1728 947"><circle cx="1114.3" cy="810.2" r="4.1" fill="#ea6a30" stroke="#141414" stroke-width="1"/></svg><svg style="left:0px;top:0px" width="1728" height="947" viewBox="0 0 1728 947"><circle cx="1114.3" cy="829" r="4.1" fill="#00a38a" stroke="#141414" stroke-width="1"/></svg></body></html>
